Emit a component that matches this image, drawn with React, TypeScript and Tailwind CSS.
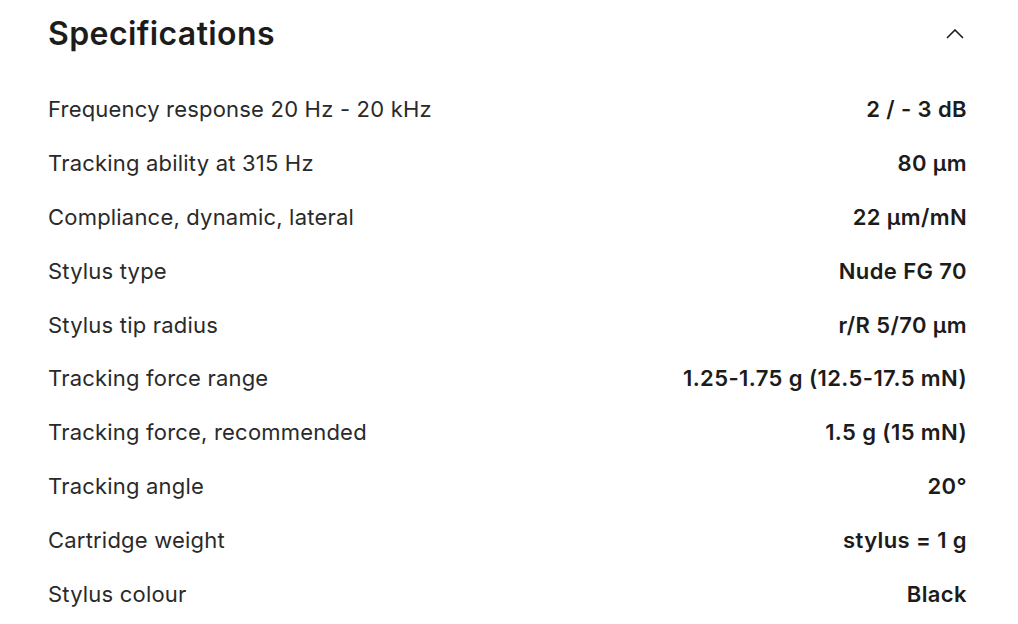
const specs: [string, string][] = [
  ["Frequency response 20 Hz - 20 kHz", "2 / - 3 dB"],
  ["Tracking ability at 315 Hz", "80 µm"],
  ["Compliance, dynamic, lateral", "22 µm/mN"],
  ["Stylus type", "Nude FG 70"],
  ["Stylus tip radius", "r/R 5/70 µm"],
  ["Tracking force range", "1.25-1.75 g (12.5-17.5 mN)"],
  ["Tracking force, recommended", "1.5 g (15 mN)"],
  ["Tracking angle", "20°"],
  ["Cartridge weight", "stylus = 1 g"],
  ["Stylus colour", "Black"],
]

export default function App() {
  return (
    <div className="min-h-screen bg-white pl-12 pr-[51px] text-[#1c1c1c] font-['Inter',sans-serif]">
      {/* Header */}
      <div className="flex h-[68px] items-center justify-between">
        <h2 className="text-[32px] font-semibold tracking-[0.4px]">Specifications</h2>
        <button className="flex h-6 w-6 items-center justify-center">
          <svg width="18" height="10" viewBox="0 0 18 10" fill="none">
            <polyline points="1,9 9,1 17,9" stroke="#1c1c1c" strokeWidth="1.6" />
          </svg>
        </button>
      </div>

      {/* Rows */}
      <div className="mt-[15px]">
        {specs.map(([label, value]) => (
          <div key={label} className="flex h-[53.8px] items-center justify-between text-[22px]">
            <span className="tracking-[0.2px] text-[#2a2a2a]">{label}</span>
            <span className="font-semibold tracking-[0.4px]">{value}</span>
          </div>
        ))}
      </div>
    </div>
  )
}
